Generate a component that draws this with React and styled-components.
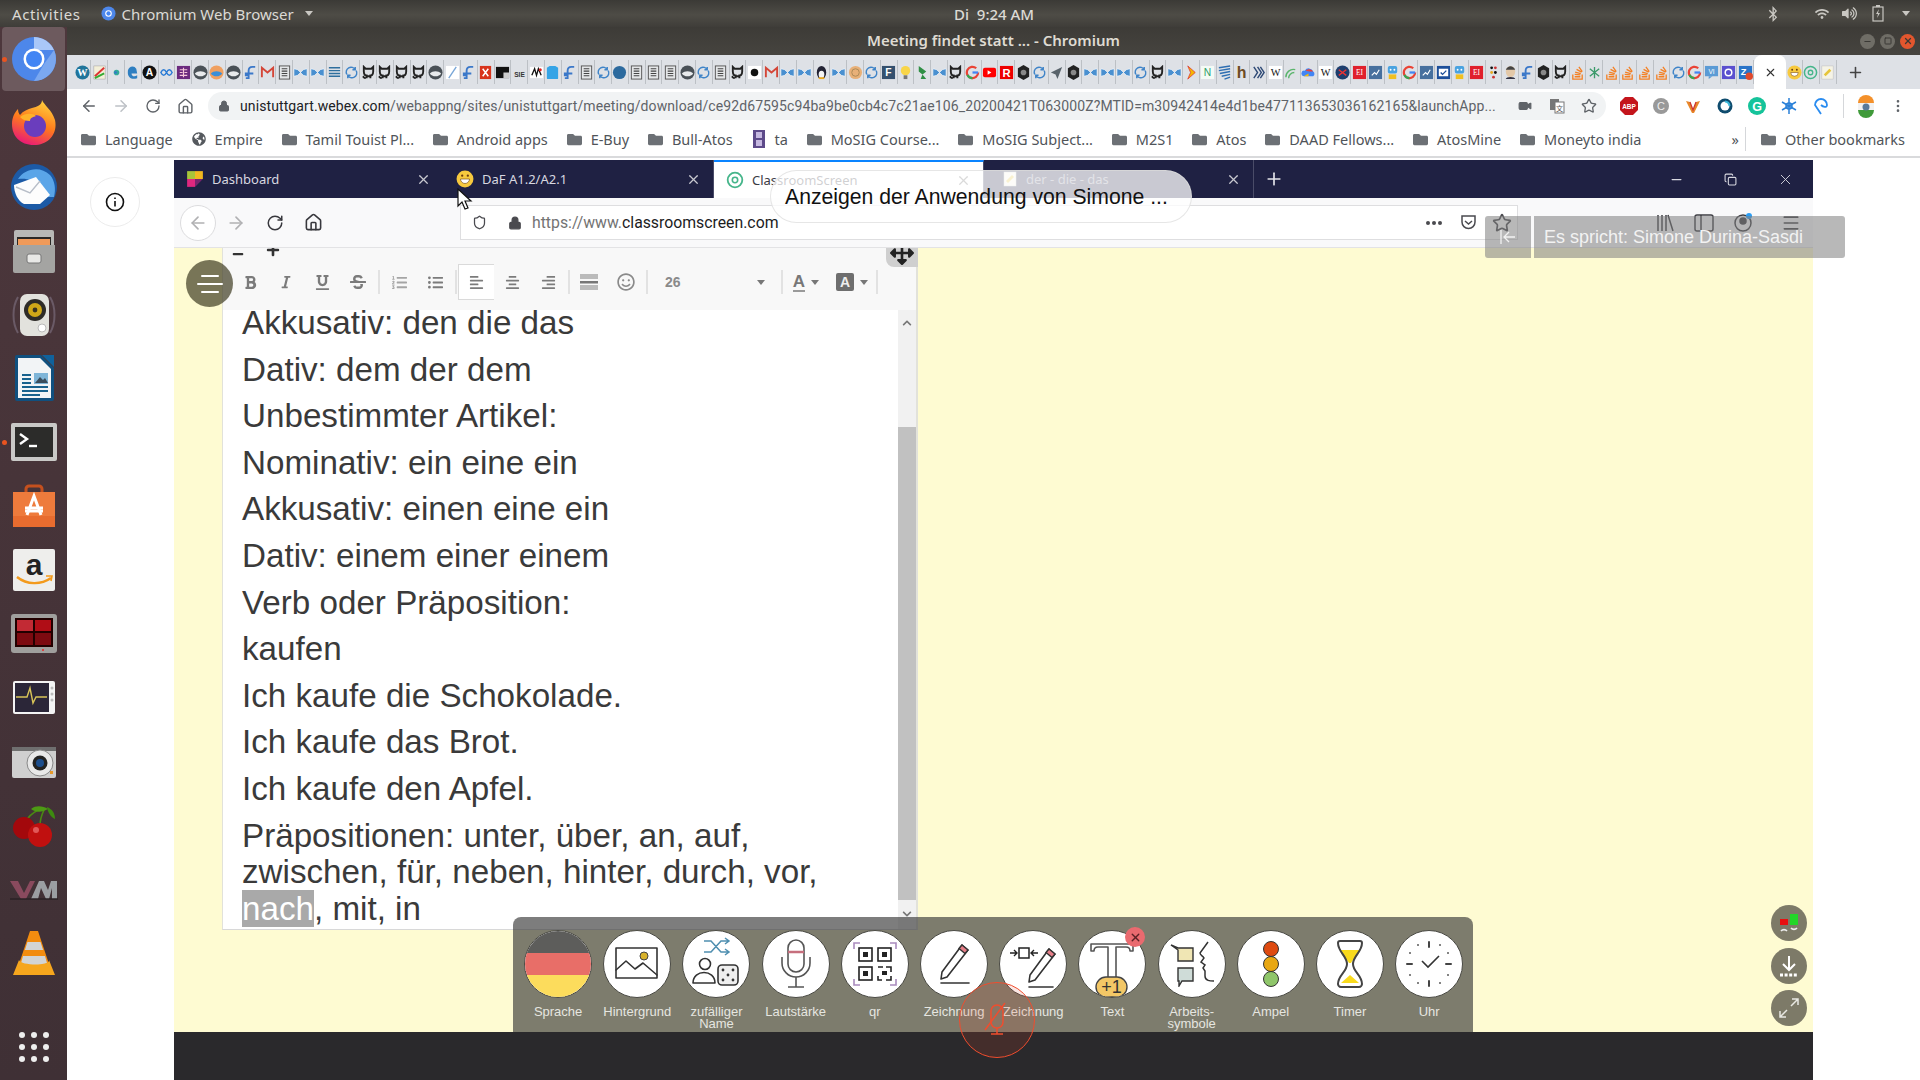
import React from "react";
import styled, { createGlobalStyle } from "styled-components";
import {
  ArrowLeft,
  ArrowRight,
  RotateCw,
  Home,
  Star,
  Video,
  Lock,
  Plus,
  X,
  Minus,
  Square,
  Copy,
  MoreVertical,
  Menu,
  Shield,
} from "lucide-react";
import {
  FaBold,
  FaItalic,
  FaUnderline,
  FaStrikethrough,
  FaListOl,
  FaListUl,
  FaAlignLeft,
  FaAlignCenter,
  FaAlignRight,
  FaRegSmile,
  FaArrowsAlt,
  FaMinus,
  FaPlus,
  FaBluetoothB,
  FaWifi,
  FaVolumeUp,
  FaFolder,
  FaGlobeAmericas,
  FaChevronUp,
  FaChevronDown,
} from "react-icons/fa";

const UI_FONT = `"Noto Sans", "Open Sans", sans-serif`;
const ARIAL = `"Liberation Sans", Arial, sans-serif`;

const Global = createGlobalStyle`
  html, body { margin: 0; padding: 0; height: 100%; overflow: hidden; background: #fff; }
  * { box-sizing: border-box; }
`;

const Screen = styled.div`
  width: 1920px;
  height: 1080px;
  display: flex;
  flex-direction: column;
  overflow: hidden;
  position: relative;
  font-family: ${UI_FONT};
`;

/* gnome top bar */
const TopBar = styled.div`
  height: 27px;
  flex: none;
  display: flex;
  align-items: center;
  color: #dcdad5;
  font-size: 15px;
  background: linear-gradient(#3b3a36, #4e4c46 55%, #3f3d39);
`;
const TopLeft = styled.div`
  width: 954px;
  display: flex;
  align-items: center;
  padding-left: 12px;
`;
const Activities = styled.span`
  letter-spacing: 0.6px;
`;
const AppName = styled.span`
  display: flex;
  align-items: center;
  gap: 6px;
  margin-left: 20px;
`;
const Caret = styled.span`
  width: 0;
  height: 0;
  border-left: 4px solid transparent;
  border-right: 4px solid transparent;
  border-top: 5px solid ${(p) => p.$color || "#c9c7c2"};
  margin-left: ${(p) => p.$gap || 5}px;
`;
const Clock = styled.div`
  font-weight: 500;
  white-space: pre;
`;
const TopStatus = styled.div`
  margin-left: auto;
  display: flex;
  align-items: center;
  padding-right: 10px;
  gap: 13px;
  color: #c9c7c2;
`;
const BluetoothIcon = styled(FaBluetoothB)`
  margin-right: 21px;
`;
const VolumeIcon = styled(FaVolumeUp)`
  margin-right: 2px;
`;

const Body = styled.div`
  flex: 1;
  display: flex;
  min-height: 0;
`;

/* launcher */
const Dock = styled.div`
  width: 67px;
  flex: none;
  display: flex;
  flex-direction: column;
  align-items: center;
  background: linear-gradient(#4d373c, #3f3035);
`;
const DockItem = styled.div`
  width: 63px;
  height: 63.9px;
  flex: none;
  display: flex;
  align-items: center;
  justify-content: center;
  position: relative;
  border-radius: 4px;
  background: ${(p) => (p.$active ? "#6d5a5e" : "transparent")};
  margin-top: ${(p) => p.$push || 0}px;
`;
const RunDot = styled.span`
  position: absolute;
  left: 0;
  top: 50%;
  width: 5px;
  height: 5px;
  margin-top: -2px;
  border-radius: 50%;
  background: #e95420;
`;

const Window = styled.div`
  flex: 1;
  min-width: 0;
  display: flex;
  flex-direction: column;
`;
const TitleBar = styled.div`
  height: 28px;
  flex: none;
  display: grid;
  grid-template-columns: 1fr auto 1fr;
  align-items: center;
  color: #dfdbd2;
  font-size: 15px;
  font-weight: 600;
  background: linear-gradient(#3d3b37, #46443f);
`;
const TitleText = styled.span`
  grid-column: 2;
  margin-top: -2px;
`;
const WinButtons = styled.div`
  grid-column: 3;
  justify-self: end;
  display: flex;
  gap: 5px;
  padding-right: 5px;
`;
const WinButton = styled.span`
  width: 15px;
  height: 15px;
  border-radius: 50%;
  display: flex;
  align-items: center;
  justify-content: center;
  background: ${(p) => (p.$close ? "#e2562e" : "#6f6d66")};
  color: #3a3935;
`;

const FavStrip = styled.div`
  height: 34px;
  flex: none;
  display: flex;
  align-items: center;
  padding-left: 7.6px;
  background: #dee1e6;
`;
const FavSlot = styled.div`
  flex: 0 0 16.8px;
  height: 24px;
  display: flex;
  align-items: center;
  justify-content: center;
  border-right: 1px solid #bcc0c5;
`;
const ActiveFavTab = styled.div`
  flex: 0 0 32px;
  height: 34px;
  border-radius: 8px 8px 0 0;
  background: #fff;
  display: flex;
  align-items: center;
  justify-content: center;
  color: #333;
`;
const PlusTab = styled.div`
  margin-left: 10px;
  color: #444;
  display: flex;
`;

const AddressRow = styled.div`
  height: 34px;
  flex: none;
  background: #fff;
  display: flex;
  align-items: center;
  padding-left: 6px;
  color: #5f6368;
`;
const NavIcon = styled.span`
  width: 32px;
  display: flex;
  justify-content: center;
  color: ${(p) => (p.$muted ? "#bdc1c6" : "#5f6368")};
`;
const Omnibox = styled.div`
  width: 1398px;
  height: 28px;
  margin-left: 7px;
  border-radius: 14px;
  background: #f1f3f4;
  display: flex;
  align-items: center;
  padding-left: 10px;
  font-size: 14px;
  color: #5f6368;
`;
const UrlText = styled.div`
  margin-left: 10px;
  width: 1269px;
  white-space: nowrap;
  overflow: hidden;
  font-family: "Roboto", sans-serif;
  letter-spacing: 0.1px;
  b {
    font-weight: 400;
    color: #202124;
  }
`;
const OmniIcon = styled.span`
  width: 32px;
  display: flex;
  justify-content: center;
  color: #5f6368;
  flex: none;
`;
const ExtIcon = styled.span`
  width: 32px;
  display: flex;
  justify-content: center;
  flex: none;
`;
const Extensions = styled.div`
  margin-left: 7px;
  display: flex;
  align-items: center;
`;
const ThinSep = styled.span`
  width: 1px;
  height: 24px;
  background: #d5d7da;
  margin: 0 6px;
  flex: none;
`;

const BookmarkRow = styled.div`
  height: 35px;
  flex: none;
  background: #fff;
  border-bottom: 2px solid #d9dadc;
  display: flex;
  align-items: center;
  padding: 0 0 1px 14px;
  font-size: 14.5px;
  color: #4d5156;
`;
const Bookmark = styled.div`
  display: flex;
  align-items: center;
  gap: 9px;
  margin-right: ${(p) => (p.$end ? 0 : 18.8)}px;
  margin-left: ${(p) => (p.$end ? 9 : 0)}px;
  white-space: nowrap;
  color: #505459;
  svg {
    flex: none;
  }
`;
const BookmarkEnd = styled.div`
  margin-left: auto;
  display: flex;
  align-items: center;
  padding-right: 15px;
  color: #505459;
`;

/* the shared browser inside the meeting */
const Stage = styled.div`
  flex: 1;
  min-height: 0;
  background: #fff;
  display: flex;
  padding-left: 107px;
  padding-top: 2px;
  position: relative;
`;
const InfoButton = styled.div`
  position: absolute;
  left: 23px;
  top: 19px;
  width: 50px;
  height: 50px;
  border-radius: 50%;
  border: 1.5px solid #ececec;
  display: flex;
  align-items: center;
  justify-content: center;
`;
const Meeting = styled.div`
  width: 1639px;
  display: flex;
  flex-direction: column;
  position: relative;
`;
const FxTabs = styled.div`
  height: 38px;
  flex: none;
  display: flex;
  background: #1f2143;
  color: #e4e4ea;
  font-size: 13px;
`;
const FxTab = styled.div`
  width: 270px;
  flex: none;
  display: flex;
  align-items: center;
  padding-left: ${(p) => p.$pad || 12}px;
  border-right: 1px solid ${(p) => (p.$first ? "transparent" : "#4a4c68")};
  background: ${(p) => (p.$active ? "#fff" : "#1f2143")};
  color: ${(p) => (p.$active ? "#3a3a44" : p.$dim ? "#8b8ca0" : "#d8d8e0")};
  border-top: ${(p) => (p.$active ? "2px solid #0a84ff" : "0")};
  gap: 8px;
`;
const FxTabClose = styled.span`
  margin-left: auto;
  margin-right: 12px;
  display: flex;
  color: ${(p) => (p.$dark ? "#666" : "#c8c8d0")};
`;
const FxNew = styled.div`
  width: 40px;
  display: flex;
  align-items: center;
  justify-content: center;
`;
const FxWinControls = styled.div`
  margin-left: auto;
  display: flex;
  align-items: center;
  padding-right: 19px;
  gap: 40px;
  color: #d8d8e0;
`;
const FxToolbar = styled.div`
  height: 50px;
  flex: none;
  background: #f9f9fa;
  border-bottom: 1px solid #e3e3e5;
  display: flex;
  align-items: center;
  position: relative;
  color: #4a4a4f;
`;
const BackCircle = styled.div`
  width: 36px;
  height: 36px;
  margin-left: 6px;
  border-radius: 50%;
  border: 1px solid #dcdcde;
  background: #fff;
  display: flex;
  align-items: center;
  justify-content: center;
  color: #b1b1b3;
`;
const FxNav = styled.span`
  width: 39px;
  display: flex;
  justify-content: center;
  color: ${(p) => (p.$muted ? "#b1b1b3" : "#38383d")};
`;
const UrlBox = styled.div`
  position: absolute;
  left: 286px;
  top: 7px;
  width: 1058px;
  height: 35px;
  background: #fff;
  border: 1px solid #dedee0;
  display: flex;
  align-items: center;
  padding-left: 2px;
  font-size: 15.8px;
  color: #737373;
  font-family: "Roboto", sans-serif;
  b {
    font-weight: 400;
    color: #1c1c1e;
  }
`;
const UrlIcon = styled.span`
  display: flex;
  width: ${(p) => p.$w || 34}px;
  justify-content: center;
  color: #4a4a4f;
  flex: none;
`;
const UrlAddress = styled.span`
  margin-left: -3px;
`;
const UrlActions = styled.span`
  margin-left: auto;
  margin-right: -2px;
  display: flex;
  align-items: center;
`;
const FxRight = styled.div`
  position: absolute;
  left: 1481px;
  top: 0;
  height: 49px;
  display: flex;
  align-items: center;
  gap: 19px;
  color: #3c3c42;
`;
const FxMenu = styled.span`
  display: flex;
  margin-left: 9px;
`;

const Page = styled.div`
  flex: 1;
  min-height: 0;
  background: #fefbd2;
  padding-left: 48px;
  position: relative;
  overflow: hidden;
`;
const Editor = styled.div`
  width: 696px;
  height: 682px;
  display: flex;
  flex-direction: column;
  background: #f8f8f8;
  border-left: 1px solid #e2e2da;
  border-right: 2px solid #e2e2da;
  border-bottom: 1px solid #d8d8d8;
  position: relative;
`;
const EditToolbar = styled.div`
  height: 62px;
  flex: none;
  color: #7b7b7b;
`;
const ZoomRow = styled.div`
  height: 14px;
  display: flex;
  align-items: flex-start;
  padding-left: 9px;
  gap: 22px;
  overflow: hidden;
  color: #333;
`;
const ZoomPlus = styled.span`
  display: flex;
  margin-top: -5px;
`;
const EditRow = styled.div`
  height: 40px;
  display: flex;
  align-items: center;
  padding-left: 9px;
`;
const ToolBtn = styled.span`
  width: ${(p) => p.$w || 36}px;
  height: ${(p) => (p.$on ? "36px" : "auto")};
  flex: none;
  display: flex;
  align-items: center;
  justify-content: center;
  background: ${(p) => (p.$on ? "#fff" : "transparent")};
  border: ${(p) => (p.$on ? "1px solid #dadada" : "0")};
  border-right: 0;
`;
const ToolSep = styled.span`
  width: 2px;
  height: 24px;
  margin: 0 1.5px;
  background: #e2e2e2;
  flex: none;
`;
const SizeSelect = styled.div`
  width: 130px;
  flex: none;
  display: flex;
  align-items: center;
  justify-content: space-between;
  padding: 0 14px 0 16px;
  font-family: ${ARIAL};
  font-size: 14px;
  font-weight: 700;
  color: #8a8a8a;
`;
const ColorBtn = styled.span`
  width: 44px;
  flex: none;
  display: flex;
  align-items: center;
  justify-content: center;
  gap: 1px;
  margin-left: ${(p) => p.$gap || 0}px;
  font-family: ${ARIAL};
  font-size: 17px;
  font-weight: 700;
  color: #777;
`;
const FilledA = styled.span`
  width: 18px;
  height: 18px;
  border-radius: 2px;
  background: #6e6e6e;
  color: #eee;
  font-size: 14px;
  text-align: center;
  line-height: 18px;
`;
const UnderA = styled.span`
  border-bottom: 2px solid #9a9a9a;
  line-height: 17px;
`;
const MoveHandle = styled.div`
  position: absolute;
  right: -2px;
  top: 0;
  width: 32px;
  height: 19px;
  background: #cfcfcf;
  border-bottom-left-radius: 8px;
  overflow: hidden;
  display: flex;
  justify-content: center;
  align-items: flex-end;
  color: #222;
  padding-bottom: 2px;
`;
const TextPane = styled.div`
  flex: 1;
  min-height: 0;
  display: flex;
  background: #fff;
  overflow: hidden;
`;
const TextFlow = styled.div`
  flex: 1;
  padding-left: 19px;
  margin-top: -5px;
  font-family: ${ARIAL};
  font-size: 33.2px;
  line-height: 36.5px;
  color: #3a3a3a;
`;
const Para = styled.p`
  margin: 0 0 10.1px;
`;
const Selected = styled.span`
  background: #a9a9a9;
  color: #fff;
`;
const ScrollTrack = styled.div`
  width: 18px;
  flex: none;
  background: #f1f1f1;
  display: flex;
  flex-direction: column;
  align-items: center;
  color: #777;
  padding-top: 8px;
`;
const ScrollThumb = styled.div`
  width: 18px;
  height: 473px;
  margin-top: 99px;
  background: #c1c1c1;
`;
const ScrollDown = styled.span`
  margin-top: 9px;
  display: flex;
`;
const Hamburger = styled.div`
  position: absolute;
  left: 12px;
  top: 12px;
  width: 47px;
  height: 47px;
  border-radius: 50%;
  background: rgba(62, 60, 34, 0.7);
  display: flex;
  flex-direction: column;
  justify-content: center;
  align-items: center;
  gap: 6px;
`;
const HamLine = styled.span`
  display: block;
  height: 2px;
  width: ${(p) => p.$w}px;
  background: #fff;
  border-radius: 1px;
`;

/* classroomscreen dock */
const ToolPanel = styled.div`
  position: absolute;
  left: 339px;
  bottom: 0;
  width: 960px;
  height: 115px;
  padding: 13px 0 0 5.5px;
  background: rgba(55, 55, 55, 0.65);
  border-radius: 8px 8px 0 0;
  display: flex;
  overflow: hidden;
`;
const Tool = styled.div`
  width: 79.2px;
  flex: none;
  display: flex;
  flex-direction: column;
  align-items: center;
  position: relative;
`;
const ToolCircle = styled.div`
  width: 68px;
  height: 68px;
  border-radius: 50%;
  background: #fff;
  border: 1px solid #4a4a44;
  overflow: hidden;
  display: flex;
  align-items: center;
  justify-content: center;
`;
const ToolLabel = styled.div`
  margin-top: 8px;
  font-family: ${ARIAL};
  font-size: 13px;
  line-height: 12px;
  color: #e6e6e0;
  text-align: center;
  white-space: pre-line;
`;
const Stripe = styled.div`
  flex: 1;
  width: 100%;
  background: ${(p) => p.$c};
`;
const FlagCircle = styled(ToolCircle)`
  flex-direction: column;
`;
const Badge = styled.span`
  position: absolute;
  right: 7px;
  top: -3px;
  width: 20px;
  height: 20px;
  border-radius: 50%;
  background: #ea6a6f;
  display: flex;
  align-items: center;
  justify-content: center;
  color: #5a2024;
`;
const SideButtons = styled.div`
  position: absolute;
  right: 6px;
  bottom: 6px;
  display: flex;
  flex-direction: column;
  gap: 6.5px;
`;
const SideButton = styled.div`
  width: 36px;
  height: 36px;
  border-radius: 50%;
  background: #7d7a68;
  display: flex;
  align-items: center;
  justify-content: center;
  color: #eee;
`;
const BottomBar = styled.div`
  height: 48px;
  flex: none;
  background: #2a292c;
`;

/* webex overlays */
const SharePill = styled.div`
  position: absolute;
  left: 596px;
  top: 10px;
  width: 422px;
  height: 53px;
  border-radius: 27px;
  border: 1px solid rgba(220, 220, 220, 0.7);
  background: rgba(255, 255, 255, 0.76);
  font-family: ${ARIAL};
  font-size: 21.2px;
  color: #111;
  padding-left: 14px;
  line-height: 51px;
  white-space: nowrap;
`;
const SpeakerBar = styled.div`
  position: absolute;
  left: 1311px;
  top: 56px;
  width: 360px;
  height: 42px;
  display: flex;
  gap: 3px;
  font-family: ${ARIAL};
  font-size: 18px;
  color: #f2f2f2;
`;
const SpeakerBack = styled.div`
  width: 46px;
  flex: none;
  background: rgba(125, 125, 125, 0.55);
  border-radius: 3px 0 0 3px;
  display: flex;
  align-items: center;
  justify-content: center;
`;
const SpeakerName = styled.div`
  flex: 1;
  background: rgba(125, 125, 125, 0.55);
  border-radius: 0 3px 3px 0;
  padding-left: 10px;
  line-height: 42px;
  white-space: nowrap;
`;
const MutedMic = styled.div`
  position: absolute;
  left: 785px;
  bottom: 22px;
  width: 76px;
  height: 76px;
  border-radius: 50%;
  border: 1.5px solid #f04d2e;
  background: rgba(230, 70, 40, 0.14);
  display: flex;
  align-items: center;
  justify-content: center;
`;
const CursorMark = styled.svg`
  position: absolute;
  left: 283px;
  top: 28px;
`;

const FAVICONS = {
  wp: (
    <>
      <circle cx="8" cy="8" r="7.5" fill="#21759b" />
      <text x="8" y="12" fontSize="11" fontFamily="Liberation Serif" fontWeight="700" fill="#fff" textAnchor="middle">W</text>
    </>
  ),
  note: (
    <>
      <rect x="2" y="1" width="12" height="14" fill="#f3efd8" stroke="#999" strokeWidth=".5" />
      <path d="M3 12 L13 3" stroke="#d33" strokeWidth="2" />
      <path d="M3 14 L13 9" stroke="#3a3" strokeWidth="2" />
    </>
  ),
  dot: <><circle cx="8" cy="8" r="3" fill="#3a9" /><circle cx="7" cy="8" r="1.4" fill="#37c" /></>,
  edge: <path d="M3 8a5 6 0 0 1 9-4l1 5H7c0 3 3 4 6 2v3c-5 2-10 0-10-6z" fill="#2f7fc1" />,
  a: (
    <>
      <circle cx="8" cy="8" r="7.5" fill="#111" />
      <text x="8" y="12" fontSize="11" fontFamily="Liberation Sans" fontWeight="700" fill="#fff" textAnchor="middle">A</text>
    </>
  ),
  inf: <path d="M2 8c2-4 4-4 6 0s4 4 6 0c-2-4-4-4-6 0s-4 4-6 0z" fill="none" stroke="#2a7bd5" strokeWidth="1.6" />,
  pur: (
    <>
      <rect x="1" y="1" width="14" height="14" fill="#6b2a7e" />
      <path d="M4 5h8M4 8h3M9 8h3M4 11h8M8 3v10" stroke="#f4c6d8" strokeWidth="1.2" />
    </>
  ),
  gl: (
    <>
      <circle cx="8" cy="8" r="7.5" fill="#4a5157" />
      <path d="M2 9c3-3 9-3 12 0-2 4-10 4-12 0z" fill="#e8eaec" />
    </>
  ),
  orb: (
    <>
      <circle cx="8" cy="8" r="7.5" fill="#f0a060" />
      <path d="M2 9c3-3 9-3 12 0-2 4-10 4-12 0z" fill="#3a8fd8" />
    </>
  ),
  fd: <path d="M10 2c-3 0-4 2-4 4v3H3v2h3v3H3M6 9h5M13 2h-3" fill="none" stroke="#3b78c9" strokeWidth="2" />,
  gm: <path d="M2 13V3l6 5 6-5v10" fill="none" stroke="#d44638" strokeWidth="2" />,
  doc: (
    <>
      <rect x="2.5" y="1" width="11" height="14" fill="#e4e6e8" stroke="#555" />
      <path d="M5 4h6M5 6.5h6M5 9h6M5 11.5h6" stroke="#444" strokeWidth="1.2" />
    </>
  ),
  vs: <path d="M1 4l4 1 3 3 3-3 4-1v8l-4-1-3-3-3 3-4 1z" fill="#4a90d0" stroke="#fff" strokeWidth=".6" />,
  lin: <path d="M2 3h12M2 6h12M2 9h12M2 12h12" stroke="#2e6f9e" strokeWidth="1.5" />,
  sw: <path d="M3 10a5 5 0 0 1 9-5M13 6a5 5 0 0 1-9 5M12 2v3H9M4 14v-3h3" fill="none" stroke="#3f84c8" strokeWidth="1.5" />,
  gh: (
    <path
      d="M3 2l2 2h6l2-2v5c0 3-2 5-5 5s-5-2-5-5zM5 14c-2 0-2-1-3-2M6 10v4M10 10v4"
      fill="none"
      stroke="#222"
      strokeWidth="2"
    />
  ),
  sl: <><rect x="1" y="1" width="14" height="14" fill="#fff" /><path d="M4 14L12 2" stroke="#7aa7d8" strokeWidth="1.5" /></>,
  red: <><rect x="2" y="1" width="12" height="14" fill="#d8341c" /><path d="M5 4l6 8M11 4l-6 8" stroke="#fff" strokeWidth="1.6" /></>,
  blk: <><rect x="1" y="2" width="14" height="12" fill="#111" /><rect x="9" y="8" width="6" height="6" fill="#ccc" /></>,
  sie: <text x="8" y="13" fontSize="7" fontFamily="Liberation Sans" fontWeight="700" fill="#333" textAnchor="middle">SIE</text>,
  wr: <><rect x="1" y="2" width="14" height="12" fill="#fff" /><path d="M3 11l3-7 2 7 2-7 3 7" fill="none" stroke="#111" strokeWidth="1.4" /><circle cx="12" cy="5" r="1.6" fill="#d22" /></>,
  ts: <path d="M2 3l3-2h6l3 2v11a1 1 0 0 1-1 1H3a1 1 0 0 1-1-1z" fill="#35a4e6" />,
  gb: <circle cx="8" cy="8" r="7" fill="#2c6a9e" />,
  bul: <><rect x="1" y="1" width="14" height="14" fill="#fff" /><circle cx="8" cy="8" r="4" fill="#111" /></>,
  tux: <><ellipse cx="8" cy="8" rx="5" ry="7" fill="#223" /><ellipse cx="8" cy="10" rx="3" ry="4" fill="#f4f4f4" /><path d="M5 14h6" stroke="#e9a820" strokeWidth="2" /></>,
  org: <><circle cx="8" cy="8" r="7" fill="#e8b078" /><circle cx="8" cy="8" r="4" fill="none" stroke="#a85" /></>,
  f: <><rect x="1" y="1" width="14" height="14" fill="#34506e" /><text x="8" y="12" fontSize="11" fontFamily="Liberation Sans" fontWeight="700" fill="#fff" textAnchor="middle">F</text></>,
  bulb: <><circle cx="8" cy="6" r="5" fill="#f8d548" /><rect x="6" y="11" width="4" height="4" fill="#777" /></>,
  grn: <path d="M4 1l8 6-4 3 4 5H6l2-5-4-3z" fill="#2f8f45" />,
  g: (
    <>
      <path d="M14 8a6 6 0 1 1-2-4.5" fill="none" stroke="#ea4335" strokeWidth="2.4" />
      <path d="M2.6 10.5A6 6 0 0 0 8 14" fill="none" stroke="#34a853" strokeWidth="2.4" />
      <path d="M8 8h6" stroke="#4285f4" strokeWidth="2.4" />
    </>
  ),
  yt: <><rect x="1" y="3" width="14" height="10" rx="2" fill="#f00" /><path d="M6 5.5v5l4-2.5z" fill="#fff" /></>,
  r: <><rect x="1" y="1" width="14" height="14" fill="#e00" /><text x="8" y="12.5" fontSize="12" fontFamily="Liberation Sans" fontWeight="700" fill="#fff" textAnchor="middle">R</text></>,
  hex: <><path d="M8 0l6 3.5v9L8 16l-6-3.5v-9z" fill="#222" /><circle cx="8" cy="8" r="3" fill="#888" /></>,
  pl: <path d="M2 8l12-6-5 13-2-5z" fill="#59636b" />,
  yr: <path d="M4 1l8 7-8 7 3-7z" fill="#f5b800" stroke="#d33" strokeWidth=".8" />,
  n: <><rect x="1" y="1" width="14" height="14" fill="#f4fbf6" /><text x="8" y="12" fontSize="11" fontFamily="Liberation Sans" fill="#2e9e6a" textAnchor="middle">N</text></>,
  bs: <path d="M2 3l12-2M2 6l12-2M3 9l11-2M5 12l9-2M8 15l6-2" stroke="#2f6fb2" strokeWidth="1.5" />,
  h: <text x="8" y="14" fontSize="17" fontFamily="Liberation Sans" fontWeight="700" fill="#6d4c24" textAnchor="middle">h</text>,
  wa: <path d="M3 2l4 6-4 6M7 2l4 6-4 6M10 2l4 6-4 6" fill="none" stroke="#2f4a76" strokeWidth="1.5" />,
  w: <><rect x="1" y="1" width="14" height="14" fill="#fff" /><text x="8" y="12" fontSize="11" fontFamily="Liberation Serif" fill="#111" textAnchor="middle">W</text></>,
  rain: <path d="M2 13a8 8 0 0 1 10-8M5 14a6 6 0 0 1 6-6" fill="none" stroke="#5bb56c" strokeWidth="1.5" />,
  cl: <><path d="M3 12a3 3 0 0 1 1-6 5 5 0 0 1 9 1 3 3 0 0 1 0 5z" fill="#4285f4" /><path d="M5 6a5 5 0 0 1 8 1H9z" fill="#ea4335" /><path d="M3 12h5V9z" fill="#fbbc05" /></>,
  bd: <><circle cx="8" cy="8" r="7.5" fill="#1f3f6e" /><path d="M4 5l8 6M12 5l-8 6" stroke="#e33" strokeWidth="1.5" /></>,
  ei: <><rect x="1" y="1" width="14" height="14" fill="#e0202c" /><text x="8" y="11" fontSize="8" fontFamily="Liberation Serif" fill="#fff" textAnchor="middle">EI</text></>,
  bdoc: <><rect x="1" y="1" width="14" height="14" fill="#47709e" /><path d="M4 11l3-3 2 2 3-5" fill="none" stroke="#fff" strokeWidth="1.2" /></>,
  rob: <><rect x="3" y="1" width="10" height="8" rx="2" fill="#4aa3e0" /><rect x="4" y="10" width="8" height="5" fill="#f0c020" /><circle cx="6" cy="5" r="1" fill="#fff" /><circle cx="10" cy="5" r="1" fill="#fff" /></>,
  chk: <><rect x="1" y="1" width="14" height="14" fill="#1d4f9a" /><rect x="3" y="4" width="10" height="8" fill="#fff" /><path d="M5 8l2 2 4-4" fill="none" stroke="#1d4f9a" strokeWidth="1.5" /></>,
  dots: <><circle cx="6" cy="3" r="1.5" fill="#111" /><circle cx="10" cy="3" r="1.5" fill="#c33" /><circle cx="6" cy="8" r="1.5" fill="#e9a820" /><circle cx="10" cy="8" r="1.5" fill="#111" /><circle cx="8" cy="13" r="1.5" fill="#c33" /></>,
  jen: <><ellipse cx="8" cy="7" rx="5" ry="6" fill="#e3c8a8" /><path d="M3 15c0-3 10-3 10 0z" fill="#334" /><path d="M3 5c2-5 8-5 10 0z" fill="#444" /></>,
  so: <path d="M3 10v5h10v-5M5 12.5h6M5 10l6 .6M5.5 7.5l6 1.6M7 4.6l5.4 3M9.5 2l3.6 5" fill="none" stroke="#f48024" strokeWidth="1.4" />,
  ast: <path d="M8 2v12M3 4l10 8M13 4L3 12" stroke="#3a9a6a" strokeWidth="1.4" />,
  vi: <><rect x="1" y="1" width="14" height="11" fill="#5b9bd5" /><path d="M5 12v3l4-3z" fill="#5b9bd5" /><text x="8" y="10" fontSize="7" fontFamily="Liberation Sans" fill="#fff" textAnchor="middle">VI</text></>,
  ppl: <><rect x="1" y="1" width="14" height="14" fill="#5a4fcf" /><circle cx="8" cy="8" r="3.5" fill="none" stroke="#fff" strokeWidth="1.6" /></>,
  z: <><rect x="1" y="1" width="14" height="14" fill="#2a74c8" /><text x="6" y="11" fontSize="10" fontFamily="Liberation Sans" fontWeight="700" fill="#fff" textAnchor="middle">Z</text><circle cx="12" cy="12" r="4" fill="#e0492c" /></>,
  emo: <><circle cx="8" cy="8" r="7.5" fill="#f7c93e" /><path d="M4 8h8a4 4 0 0 1-8 0z" fill="#fff" stroke="#7a4a10" strokeWidth=".6" /><circle cx="5.5" cy="5" r="1" fill="#6a3a10" /><circle cx="10.5" cy="5" r="1" fill="#6a3a10" /></>,
  crs: <><circle cx="8" cy="8" r="6.5" fill="none" stroke="#45b58a" strokeWidth="1.6" /><circle cx="8" cy="8" r="2.4" fill="none" stroke="#45b58a" strokeWidth="1.4" /></>,
  nt: <><rect x="2" y="1" width="12" height="14" fill="#f5f3e6" stroke="#bbb" strokeWidth=".5" /><path d="M4 10l6-6 2 2-6 6z" fill="#e6c53a" /></>,
  dash: <><rect x="1" y="1" width="7" height="7" fill="#a7c53a" /><rect x="8" y="1" width="7" height="7" fill="#f1b81f" /><rect x="1" y="8" width="7" height="7" fill="#e0277f" /><path d="M8 8h7l-7 7z" fill="#77246e" /></>,
};

const FAV_ROW =
  "wp note dot edge a inf pur gl orb gl fd gm doc vs vs lin sw gh gh gh gh gl sl fd red blk sie wr ts fd doc sw gb doc doc doc gl sw doc gh bul gm vs vs tux vs org sw f bulb grn vs gh g yt r hex sw pl hex vs vs vs sw gh vs yr n bs h wa w rain cl w bd ei bdoc rob g bdoc chk rob ei dots jen fd hex gh so ast so so so so sw g vi ppl z".split(
    " "
  );

function Fav({ kind, size = 16 }) {
  return (
    <svg width={size} height={size} viewBox="0 0 16 16">
      {FAVICONS[kind]}
    </svg>
  );
}

const BOOKMARKS = [
  ["Language"],
  ["Empire", "globe"],
  ["Tamil Touist Pl..."],
  ["Android apps"],
  ["E-Buy"],
  ["Bull-Atos"],
  ["ta", "film"],
  ["MoSIG Course..."],
  ["MoSIG Subject..."],
  ["M2S1"],
  ["Atos"],
  ["DAAD Fellows..."],
  ["AtosMine"],
  ["Moneyto india"],
];

function BookmarkIcon({ type }) {
  if (type === "globe") return <FaGlobeAmericas size={14} color="#55595e" />;
  if (type === "film")
    return (
      <svg width="14" height="18" viewBox="0 0 14 18">
        <rect x="1" y="0" width="12" height="18" fill="#5d4a8a" />
        <rect x="4" y="2" width="6" height="6" fill="#c5b8e0" />
        <rect x="4" y="10" width="6" height="6" fill="#c5b8e0" />
      </svg>
    );
  return <FaFolder size={15} color="#6c7075" />;
}

/* launcher artwork */
const DOCK_ICONS = [
  <svg key="chromium" width="46" height="46" viewBox="0 0 46 46">
    <circle cx="23" cy="23" r="22" fill="#4d87ea" />
    <path d="M23 1a22 22 0 0 1 20 13H23z" fill="#a9c7f8" />
    <path d="M43 14a22 22 0 0 1-20 31l10-17z" fill="#7ba8f0" />
    <circle cx="23" cy="23" r="10.5" fill="#fff" />
    <circle cx="23" cy="23" r="8" fill="#4285f4" />
  </svg>,
  <svg key="firefox" width="46" height="46" viewBox="0 0 46 46">
    <defs>
      <linearGradient id="ffx" x1="0.7" y1="0" x2="0.3" y2="1">
        <stop offset="0" stopColor="#ffd13d" />
        <stop offset=".5" stopColor="#ff7b1c" />
        <stop offset="1" stopColor="#e8167a" />
      </linearGradient>
    </defs>
    <path d="M31 0c2 5 10 10 13 20 3 14-7 25-21 25S1 36 1 24C1 17 4 12 7 9c0 3 1 5 2 6 3-4 8-6 12-7 5-1 10-3 10-8z" fill="url(#ffx)" />
    <circle cx="24" cy="26" r="11" fill="#6a3dbd" />
    <path d="M9 17c5-4 13-4 16-1-3 1-6 2-6 5-4 0-7-1-10-4z" fill="#ffb32a" />
  </svg>,
  <svg key="tbird" width="48" height="48" viewBox="0 0 48 48">
    <circle cx="24" cy="24" r="23" fill="#1c5aa6" />
    <path d="M8 16C14 6 30 2 40 12c5 6 6 14 4 22l-12 0C34 24 24 14 8 16z" fill="#5aa5e8" />
    <path d="M4 22l22-8 14 18-10 9H14C8 38 4 30 4 22z" fill="#fdfdfd" />
    <path d="M6 24l14 6 10-12" fill="none" stroke="#b8bec8" strokeWidth="1.4" />
  </svg>,
  <svg key="files" width="42" height="44" viewBox="0 0 42 44">
    <rect x="1" y="1" width="40" height="42" rx="2" fill="#b8b8b6" />
    <rect x="4" y="8" width="34" height="12" fill="#2a2826" />
    <rect x="5" y="10" width="32" height="9" fill="#ef9a5a" />
    <path d="M0 16h42v26a2 2 0 0 1-2 2H2a2 2 0 0 1-2-2z" fill="#a4a4a2" />
    <rect x="14" y="25" width="14" height="9" rx="2" fill="#e8e8e6" stroke="#777" />
  </svg>,
  <svg key="speaker" width="48" height="44" viewBox="0 0 48 44">
    <path d="M8 4C2 14 2 30 8 40M40 4c6 10 6 26 0 36" fill="none" stroke="#6a5a66" strokeWidth="2" />
    <rect x="10" y="1" width="29" height="42" rx="7" fill="#e2e2dd" />
    <circle cx="25" cy="17" r="11" fill="#2e2c28" />
    <circle cx="25" cy="17" r="7" fill="#d0a818" />
    <circle cx="25" cy="17" r="2.4" fill="#3a3420" />
    <circle cx="32" cy="35" r="4" fill="#fff" stroke="#bbb" />
  </svg>,
  <svg key="writer" width="42" height="48" viewBox="0 0 42 48">
    <path d="M2 3a2 2 0 0 1 2-2h24l13 13v31a2 2 0 0 1-2 2H4a2 2 0 0 1-2-2z" fill="#10507f" />
    <path d="M5 4h22l11 11v29H5z" fill="#f2f4f6" />
    <path d="M29 1h12v12z" fill="#10629c" />
    <path d="M9 21h9M9 25h9M9 29h9M9 33h26M9 37h26M9 41h18" stroke="#18628e" strokeWidth="2" />
    <rect x="21" y="19" width="14" height="11" fill="#7fb5d8" />
    <path d="M22 29l5-6 3 3 2-2 3 5z" fill="#3a4d5c" />
  </svg>,
  <svg key="terminal" width="46" height="38" viewBox="0 0 46 38">
    <rect x="0" y="0" width="46" height="38" rx="2" fill="#c9c9c7" />
    <rect x="4" y="4" width="38" height="30" fill="#2c2c2a" />
    <path d="M9 11l7 5-7 5" fill="none" stroke="#fff" strokeWidth="2.4" />
    <path d="M18 23h8" stroke="#fff" strokeWidth="2.4" />
  </svg>,
  <svg key="store" width="42" height="44" viewBox="0 0 42 44">
    <path d="M13 10V5a3 3 0 0 1 3-3h10a3 3 0 0 1 3 3v5" fill="none" stroke="#c5501e" strokeWidth="3" />
    <path d="M0 8h42v35H0z" fill="#ee7b3c" />
    <path d="M0 32h42v11H0z" fill="#e86c2f" />
    <path d="M14 31l7-19 7 19M12 24h18" fill="none" stroke="#fff" strokeWidth="3" />
    <path d="M12 27h18" stroke="#fff" strokeWidth="3" />
  </svg>,
  <svg key="amazon" width="42" height="42" viewBox="0 0 42 42">
    <rect x="0" y="0" width="42" height="42" rx="2" fill="#eeeeec" />
    <text x="21" y="26" fontSize="30" fontFamily="Liberation Sans" fontWeight="700" fill="#222" textAnchor="middle">a</text>
    <path d="M4 28c10 8 24 8 34 1" fill="none" stroke="#f39a1c" strokeWidth="2.4" />
    <path d="M33 27l6 0-1 5" fill="none" stroke="#f39a1c" strokeWidth="1.6" />
  </svg>,
  <svg key="multi" width="46" height="39" viewBox="0 0 46 39">
    <rect x="0" y="0" width="46" height="39" rx="3" fill="#9f9f9d" />
    <rect x="4" y="4" width="38" height="29" fill="#200" />
    <rect x="6" y="6" width="16" height="11" fill="#c22a34" />
    <rect x="24" y="6" width="16" height="11" fill="#b00d16" />
    <rect x="6" y="19" width="16" height="12" fill="#7c0a10" />
    <rect x="24" y="19" width="16" height="12" fill="#7c0a10" />
    <circle cx="32" cy="36" r="1" fill="#e22" />
  </svg>,
  <svg key="monitor" width="42" height="33" viewBox="0 0 42 33">
    <rect x="0" y="0" width="42" height="33" rx="2" fill="#f4f4f4" />
    <rect x="2" y="2" width="34" height="29" fill="#2b2638" />
    <path d="M3 16h11l3-9 3 15 3-6h11" fill="none" stroke="#d8c458" strokeWidth="1.4" />
    <circle cx="39" cy="7" r="1.5" fill="#bbb" />
    <circle cx="39" cy="13" r="1.5" fill="#bbb" />
    <circle cx="39" cy="19" r="1.5" fill="#bbb" />
  </svg>,
  <svg key="camera" width="44" height="32" viewBox="0 0 44 32">
    <rect x="0" y="1" width="44" height="31" rx="2" fill="#cfcfcf" />
    <rect x="0" y="1" width="44" height="4" fill="#6f6f6f" />
    <circle cx="28" cy="17" r="13" fill="#e8e8e8" stroke="#888" />
    <circle cx="28" cy="17" r="7.5" fill="#222" />
    <circle cx="28" cy="17" r="4" fill="#1b4d8c" />
    <rect x="38" y="25" width="3" height="3" fill="#e89a2a" />
  </svg>,
  <svg key="cherry" width="44" height="44" viewBox="0 0 44 44">
    <path d="M14 18C16 12 22 8 28 5M28 22c0-6 2-12 4-16" fill="none" stroke="#4a8a12" strokeWidth="1.6" />
    <path d="M19 5c5-4 12-3 17 0-5 3-12 4-17 0z" fill="#4d9a14" />
    <path d="M35 3c5 2 8 6 8 12-4-2-7-6-8-12z" fill="#3d8a10" />
    <circle cx="12" cy="24" r="11" fill="#a3080c" />
    <circle cx="28" cy="31" r="12" fill="#c0100f" />
    <circle cx="24" cy="26" r="3" fill="#e77" opacity=".7" />
  </svg>,
  <svg key="vm" width="48" height="20" viewBox="0 0 48 20">
    <path d="M0 1h8l6 12 6-12h5L16 19h-5z" fill="#8a4a5e" />
    <path d="M21 19l8-18h5l4 9 3-9h6v18h-5V8l-3 11h-3l-5-11-3 11z" fill="#9b9ea2" />
    <path d="M0 19h48" stroke="#2b2226" strokeWidth="1.4" />
  </svg>,
  <svg key="vlc" width="42" height="46" viewBox="0 0 42 46">
    <path d="M17 1h8l12 36H5z" fill="#f28c0f" />
    <path d="M14.5 12h13l2.6 8h-18.2zM10 26h22l2 7c-6 3-20 3-26 0z" fill="#d2d4d4" />
    <path d="M6 30L0 45h42l-6-15c2 6-28 6-30 0z" fill="#f6a61d" />
  </svg>,
];

function ToolGlyph({ name }) {
  const line = { fill: "none", stroke: "#333", strokeWidth: 1.6, strokeLinejoin: "round", strokeLinecap: "round" };
  switch (name) {
    case "image":
      return (
        <svg width="44" height="34" viewBox="0 0 44 34">
          <rect x="1" y="1" width="41" height="30" {...line} />
          <path d="M1 23l10-9 9 8 8-6 14 12" {...line} />
          <circle cx="29" cy="9" r="4" fill="#d8b22c" stroke="#444" />
        </svg>
      );
    case "random":
      return (
        <svg width="48" height="54" viewBox="0 0 48 54">
          <path d="M12 4h7l10 11h7M12 15h7l10-11h7M33 1l4 3-4 3M33 12l4 3-4 3" fill="none" stroke="#4f8fb0" strokeWidth="1.5" />
          <circle cx="13" cy="27" r="5.5" {...line} />
          <path d="M1 46c0-14 22-14 22 0z" {...line} />
          <rect x="26" y="28" width="20" height="20" rx="4" fill="#eee" stroke="#333" strokeWidth="1.6" />
          <g fill="#333">
            <circle cx="31" cy="33" r="1.4" /><circle cx="41" cy="33" r="1.4" /><circle cx="36" cy="38" r="1.4" /><circle cx="31" cy="43" r="1.4" /><circle cx="41" cy="43" r="1.4" />
          </g>
        </svg>
      );
    case "mic":
      return (
        <svg width="30" height="50" viewBox="0 0 30 50">
          <rect x="7" y="1" width="16" height="32" rx="8" fill="none" stroke="#555" strokeWidth="1.6" />
          <path d="M7 13h16" stroke="#c66f7d" strokeWidth="2.4" />
          <path d="M1 18v6a14 14 0 0 0 28 0v-6M15 38v10M7 48h16" fill="none" stroke="#555" strokeWidth="1.6" />
        </svg>
      );
    case "qr":
      return (
        <svg width="44" height="44" viewBox="0 0 44 44">
          <path d="M1 7V1h6M37 1h6v6M43 37v6h-6M7 43H1v-6" fill="none" stroke="#a98bbd" strokeWidth="1.6" />
          <g fill="none" stroke="#222" strokeWidth="1.6">
            <rect x="6" y="6" width="13" height="13" /><rect x="25" y="6" width="13" height="13" /><rect x="6" y="25" width="13" height="13" />
            <path d="M25 25h5M33 25h5v5M38 34v4h-5M29 38h-4v-4" />
          </g>
          <g fill="#222">
            <rect x="10" y="10" width="5" height="5" /><rect x="29" y="10" width="5" height="5" /><rect x="10" y="29" width="5" height="5" /><rect x="29" y="29" width="5" height="4" />
          </g>
        </svg>
      );
    case "pencil":
      return (
        <svg width="32" height="44" viewBox="0 0 32 44">
          <path d="M24 3l6 5L9 35l-6 2 1-7z" {...line} />
          <path d="M24 3l6 5-3 3.500-6-5z" fill="#e67e88" stroke="#333" strokeWidth="1.4" />
          <path d="M3 41h28" {...line} />
        </svg>
      );
    case "pencilLine":
      return (
        <svg width="48" height="48" viewBox="0 0 48 48">
          <path d="M1 13h7M5 10l3 3-3 3M29 13h-7M25 10l-3 3 3 3" fill="none" stroke="#222" strokeWidth="1.4" />
          <rect x="10" y="8" width="10" height="10" fill="none" stroke="#222" strokeWidth="1.5" />
          <path d="M40 9l6 5-20 26-6 2 1-7z" {...line} />
          <path d="M40 9l6 5-3 3.500-6-5z" fill="#e67e88" stroke="#333" strokeWidth="1.4" />
          <path d="M20 47h24" {...line} />
        </svg>
      );
    case "text":
      return (
        <svg width="56" height="68" viewBox="0 0 56 68">
          <path d="M7 21v-7h42v7h-3c0-3-1-4-4-4H32v34h-8V17H14c-3 0-4 1-4 4z" fill="#fff" stroke="#555" strokeWidth="1.6" strokeLinejoin="round" />
          <rect x="12" y="47" width="31" height="20" rx="10" fill="#f3c766" stroke="#444" strokeWidth="1.4" />
          <text x="27.500" y="63" fontSize="18" fontFamily="Liberation Sans" fill="#333" textAnchor="middle">+1</text>
        </svg>
      );
    case "speech":
      return (
        <svg width="44" height="46" viewBox="0 0 44 46">
          <path d="M1 4l7 3h15v13H8V9z" fill="#f0e6b4" stroke="#333" strokeWidth="1.4" />
          <path d="M8 27h15v13H12l-3 5v-5H8z" fill="#cfdcd8" stroke="#333" strokeWidth="1.4" />
          <path d="M38 1l-8 11c0 2 3 3 4 5l-3 4 4 3-2 3 2 3v5c0 5 5 5 10 5" fill="none" stroke="#333" strokeWidth="1.5" />
        </svg>
      );
    case "lights":
      return (
        <svg width="18" height="48" viewBox="0 0 18 48">
          <circle cx="9" cy="9" r="7.5" fill="#de4a10" stroke="#333" />
          <circle cx="9" cy="24" r="7.5" fill="#e8a712" stroke="#333" />
          <circle cx="9" cy="39" r="7.5" fill="#8fc66a" stroke="#333" />
        </svg>
      );
    case "hourglass":
      return (
        <svg width="30" height="48" viewBox="0 0 30 48">
          <path d="M6 10h18c-1 6-7 9-7 14s7 8 9 16c0 4-2 5-4 5H7c-3 0-5-2-4-5 1-8 9-11 9-16S6 16 6 10z" fill="#fff" />
          <path d="M5 10c1 6 7 9 9 13h2c2-4 8-7 9-13z" fill="#f9da1c" />
          <path d="M6 43l9-8 9 8z" fill="#f9da1c" />
          <path d="M3 3c0-1 1-2 2-2h20c1 0 2 1 2 2 0 9-9 13-9 21s9 11 9 20c0 1-1 3-3 3H6c-2 0-3-2-3-3 0-9 9-12 9-20S3 12 3 3z" fill="none" stroke="#444" strokeWidth="2" />
        </svg>
      );
    case "clock":
      return (
        <svg width="48" height="48" viewBox="0 0 48 48">
          <g stroke="#444" strokeWidth="2" strokeLinecap="round">
            <path d="M24 2v5M24 41v5M2 24h5M41 24h5" />
          </g>
          <g fill="#666">
            <circle cx="13" cy="5" r="1.100" /><circle cx="35" cy="5" r="1.100" /><circle cx="5" cy="13" r="1.100" /><circle cx="43" cy="13" r="1.100" />
            <circle cx="5" cy="35" r="1.100" /><circle cx="43" cy="35" r="1.100" /><circle cx="13" cy="43" r="1.100" /><circle cx="35" cy="43" r="1.100" />
          </g>
          <path d="M17 21l6 6 11-11" fill="none" stroke="#333" strokeWidth="1.6" />
        </svg>
      );
    default:
      return null;
  }
}

const TOOLS = [
  { label: "Hintergrund", glyph: "image" },
  { label: "zufälliger\nName", glyph: "random" },
  { label: "Lautstärke", glyph: "mic" },
  { label: "qr", glyph: "qr" },
  { label: "Zeichnung", glyph: "pencil" },
  { label: "Zeichnung", glyph: "pencilLine" },
  { label: "Text", glyph: "text", badge: true },
  { label: "Arbeits-\nsymbole", glyph: "speech" },
  { label: "Ampel", glyph: "lights" },
  { label: "Timer", glyph: "hourglass" },
  { label: "Uhr", glyph: "clock" },
];

const LINES = [
  "Akkusativ: den die das",
  "Dativ: dem der dem",
  "Unbestimmter Artikel:",
  "Nominativ: ein eine ein",
  "Akkusativ: einen eine ein",
  "Dativ: einem einer einem",
  "Verb oder Präposition:",
  "kaufen",
  "Ich kaufe die Schokolade.",
  "Ich kaufe das Brot.",
  "Ich kaufe den Apfel.",
];

export default function App() {
  return (
    <Screen>
      <Global />
      <TopBar>
        <TopLeft>
          <Activities>Activities</Activities>
          <AppName>
            <svg width="15" height="15" viewBox="0 0 16 16">
              <circle cx="8" cy="8" r="7.500" fill="#4d87ea" />
              <circle cx="8" cy="8" r="3.500" fill="#fff" />
              <circle cx="8" cy="8" r="2.300" fill="#4285f4" />
            </svg>
            Chromium Web Browser
            <Caret />
          </AppName>
        </TopLeft>
        <Clock>Di  9:24 AM</Clock>
        <TopStatus>
          <BluetoothIcon size={16} />
          <FaWifi size={14} />
          <VolumeIcon size={15} />
          <svg width="12" height="17" viewBox="0 0 12 17">
            <rect x="1" y="2" width="10" height="14" fill="none" stroke="#c9c7c2" strokeWidth="1.2" />
            <rect x="4" y="0" width="4" height="2" fill="#c9c7c2" />
            <path d="M7 4L4 9h2l-1 4 3-5H6z" fill="#c9c7c2" />
          </svg>
          <Caret $gap={0} />
        </TopStatus>
      </TopBar>
      <Body>
        <Dock>
          {DOCK_ICONS.map((icon, i) => (
            <DockItem key={i} $active={i === 0}>
              {(i === 0 || i === 6) && <RunDot />}
              {icon}
            </DockItem>
          ))}
          <DockItem $push={30}>
            <svg width="30" height="30" viewBox="0 0 30 30" fill="#eee">
              {[3, 15, 27].flatMap((y) =>
                [3, 15, 27].map((x) => <circle key={`${x}-${y}`} cx={x} cy={y} r="3" />)
              )}
            </svg>
          </DockItem>
        </Dock>
        <Window>
          <TitleBar>
            <TitleText>Meeting findet statt ... - Chromium</TitleText>
            <WinButtons>
              <WinButton><Minus size={9} strokeWidth={3} /></WinButton>
              <WinButton><Square size={8} strokeWidth={3} /></WinButton>
              <WinButton $close><X size={10} strokeWidth={3} /></WinButton>
            </WinButtons>
          </TitleBar>
          <FavStrip>
            {FAV_ROW.map((kind, i) => (
              <FavSlot key={i}>
                <Fav kind={kind} size={15} />
              </FavSlot>
            ))}
            <ActiveFavTab><X size={13} /></ActiveFavTab>
            <FavSlot><Fav kind="emo" size={15} /></FavSlot>
            <FavSlot><Fav kind="crs" size={15} /></FavSlot>
            <FavSlot><Fav kind="nt" size={15} /></FavSlot>
            <PlusTab><Plus size={17} strokeWidth={2.2} /></PlusTab>
          </FavStrip>
          <AddressRow>
            <NavIcon><ArrowLeft size={18} /></NavIcon>
            <NavIcon $muted><ArrowRight size={18} /></NavIcon>
            <NavIcon><RotateCw size={16} /></NavIcon>
            <NavIcon><Home size={17} /></NavIcon>
            <Omnibox>
              <Lock size={12} fill="#5f6368" />
              <UrlText>
                <b>unistuttgart.webex.com</b>/webappng/sites/unistuttgart/meeting/download/ce92d67595c94ba9be0cb4c7c21ae106_20200421T063000Z?MTID=m30942414e4d1be477113653036162165&amp;launchApp...
              </UrlText>
              <OmniIcon><Video size={14} fill="#5f6368" /></OmniIcon>
              <OmniIcon>
                <svg width="16" height="16" viewBox="0 0 16 16">
                  <rect x="1" y="1" width="9" height="11" fill="#777" />
                  <rect x="6" y="4" width="9" height="11" fill="#fff" stroke="#777" />
                  <text x="10.500" y="13" fontSize="7" fontFamily="Noto Sans CJK SC" fill="#555" textAnchor="middle">文</text>
                </svg>
              </OmniIcon>
              <OmniIcon><Star size={16} /></OmniIcon>
            </Omnibox>
            <Extensions>
              <ExtIcon>
                <svg width="18" height="18" viewBox="0 0 18 18">
                  <path d="M5 0h8l5 5v8l-5 5H5l-5-5V5z" fill="#c4151c" />
                  <text x="9" y="12" fontSize="6.500" fontFamily="Liberation Sans" fontWeight="700" fill="#fff" textAnchor="middle">ABP</text>
                </svg>
              </ExtIcon>
              <ExtIcon>
                <svg width="16" height="16" viewBox="0 0 16 16">
                  <circle cx="8" cy="8" r="8" fill="#999" />
                  <text x="8" y="12" fontSize="11" fontFamily="Liberation Sans" fill="#eee" textAnchor="middle">C</text>
                </svg>
              </ExtIcon>
              <ExtIcon>
                <svg width="16" height="16" viewBox="0 0 16 16">
                  <path d="M1 3l4 1 3 8 3-8 4-1-6 12H7z" fill="#e8882a" />
                  <path d="M5 4l3 8 3-8" fill="none" stroke="#c33" strokeWidth="1.200" />
                </svg>
              </ExtIcon>
              <ExtIcon>
                <svg width="16" height="16" viewBox="0 0 16 16">
                  <circle cx="8" cy="8" r="7.500" fill="#0f4c6e" />
                  <circle cx="8" cy="8" r="4.500" fill="#fff" />
                  <path d="M8 3.500A4.500 4.500 0 0 1 12.500 8" stroke="#39b6d8" strokeWidth="2" fill="none" />
                </svg>
              </ExtIcon>
              <ExtIcon>
                <svg width="18" height="18" viewBox="0 0 18 18">
                  <circle cx="9" cy="9" r="9" fill="#15c39a" />
                  <text x="9" y="13.500" fontSize="12.500" fontFamily="Liberation Sans" fontWeight="700" fill="#fff" textAnchor="middle">G</text>
                </svg>
              </ExtIcon>
              <ExtIcon>
                <svg width="18" height="18" viewBox="0 0 18 18" fill="none" stroke="#2a80d8" strokeWidth="1.500">
                  <path d="M9 1v16M2 5l14 8M16 5L2 13" />
                  <circle cx="9" cy="9" r="3" />
                </svg>
              </ExtIcon>
              <ExtIcon>
                <svg width="16" height="18" viewBox="0 0 16 18" fill="none" stroke="#2a8cf0" strokeWidth="1.800">
                  <path d="M8 17L2 8a6 6 0 1 1 12 0c0 3-4 2-6 0" />
                </svg>
              </ExtIcon>
              <ThinSep />
              <ExtIcon>
                <svg width="24" height="24" viewBox="0 0 24 24">
                  <path d="M4 9a8 8 0 0 1 16 0z" fill="#f4902a" />
                  <rect x="4" y="9" width="16" height="7" fill="#f2f2f2" />
                  <path d="M4 16h16a8 8 0 0 1-16 0z" fill="#3f9a3a" />
                  <circle cx="12" cy="13" r="3.500" fill="#5a7a9a" />
                </svg>
              </ExtIcon>
              <ExtIcon><MoreVertical size={16} color="#5f6368" /></ExtIcon>
            </Extensions>
          </AddressRow>
          <BookmarkRow>
            {BOOKMARKS.map(([label, type]) => (
              <Bookmark key={label}>
                <BookmarkIcon type={type} />
                {label}
              </Bookmark>
            ))}
            <BookmarkEnd>
              »
              <ThinSep />
              <Bookmark $end>
                <BookmarkIcon />
                Other bookmarks
              </Bookmark>
            </BookmarkEnd>
          </BookmarkRow>
          <Stage>
            <InfoButton>
              <svg width="20" height="20" viewBox="0 0 20 20" fill="none" stroke="#111" strokeWidth="1.600">
                <circle cx="10" cy="10" r="8.500" />
                <path d="M10 9v5.500M10 5.500v1.600" />
              </svg>
            </InfoButton>
            <Meeting>
              <FxTabs>
                <FxTab $first>
                  <Fav kind="dash" size={18} />
                  Dashboard
                  <FxTabClose><X size={15} /></FxTabClose>
                </FxTab>
                <FxTab>
                  <Fav kind="emo" size={18} />
                  DaF A1.2/A2.1
                  <FxTabClose><X size={15} /></FxTabClose>
                </FxTab>
                <FxTab $active>
                  <Fav kind="crs" size={18} />
                  ClassroomScreen
                  <FxTabClose $dark><X size={15} /></FxTabClose>
                </FxTab>
                <FxTab $dim $pad={18}>
                  <Fav kind="nt" size={16} />
                  der - die - das
                  <FxTabClose><X size={15} /></FxTabClose>
                </FxTab>
                <FxNew><Plus size={20} /></FxNew>
                <FxWinControls>
                  <Minus size={15} />
                  <Copy size={13} />
                  <X size={17} strokeWidth={1.300} />
                </FxWinControls>
              </FxTabs>
              <FxToolbar>
                <BackCircle><ArrowLeft size={20} /></BackCircle>
                <FxNav $muted><ArrowRight size={20} /></FxNav>
                <FxNav><RotateCw size={18} /></FxNav>
                <FxNav><Home size={19} /></FxNav>
                <UrlBox>
                  <UrlIcon $w={32}><Shield size={15} /></UrlIcon>
                  <UrlIcon $w={40}><Lock size={14} fill="#4a4a4f" /></UrlIcon>
                  <UrlAddress>
                    https://www.<b>classroomscreen.com</b>
                  </UrlAddress>
                  <UrlActions>
                    <UrlIcon>
                      <svg width="18" height="6" viewBox="0 0 18 6" fill="#4a4a4f">
                        <circle cx="3" cy="3" r="2" /><circle cx="9" cy="3" r="2" /><circle cx="15" cy="3" r="2" />
                      </svg>
                    </UrlIcon>
                    <UrlIcon>
                      <svg width="17" height="17" viewBox="0 0 17 17" fill="none" stroke="#4a4a4f" strokeWidth="1.500">
                        <path d="M2 2h13v6a6.500 6.500 0 0 1-13 0z" />
                        <path d="M5 7l3.500 3L12 7" />
                      </svg>
                    </UrlIcon>
                    <UrlIcon><Star size={20} /></UrlIcon>
                  </UrlActions>
                </UrlBox>
                <FxRight>
                  <svg width="20" height="18" viewBox="0 0 20 18" stroke="#3c3c42" strokeWidth="1.500">
                    <path d="M3 1v16M7 1v16M11 1v16M13 1l5 16" />
                  </svg>
                  <svg width="20" height="18" viewBox="0 0 20 18" fill="none" stroke="#3c3c42" strokeWidth="1.500">
                    <rect x="1" y="1" width="18" height="16" rx="2" />
                    <path d="M7 1v16" />
                  </svg>
                  <svg width="20" height="20" viewBox="0 0 20 20" fill="none" stroke="#3c3c42" strokeWidth="1.500">
                    <circle cx="10" cy="10" r="8" />
                    <circle cx="10" cy="8" r="3" fill="#3c3c42" />
                    <circle cx="16" cy="3" r="3" fill="#2a9df4" stroke="none" />
                  </svg>
                  <FxMenu><Menu size={20} /></FxMenu>
                </FxRight>
              </FxToolbar>
              <Page>
                <Editor>
                  <EditToolbar>
                    <ZoomRow>
                      <FaMinus size={12} />
                      <ZoomPlus><FaPlus size={14} /></ZoomPlus>
                    </ZoomRow>
                    <EditRow>
                      <ToolBtn><FaBold size={15} /></ToolBtn>
                      <ToolBtn><FaItalic size={14} /></ToolBtn>
                      <ToolBtn><FaUnderline size={15} /></ToolBtn>
                      <ToolBtn><FaStrikethrough size={16} /></ToolBtn>
                      <ToolSep />
                      <ToolBtn><FaListOl size={15} color="#a5a5a5" /></ToolBtn>
                      <ToolBtn><FaListUl size={15} /></ToolBtn>
                      <ToolSep />
                      <ToolBtn $on><FaAlignLeft size={15} /></ToolBtn>
                      <ToolBtn><FaAlignCenter size={15} /></ToolBtn>
                      <ToolBtn><FaAlignRight size={15} /></ToolBtn>
                      <ToolSep />
                      <ToolBtn>
                        <svg width="18" height="16" viewBox="0 0 18 16">
                          <rect x="0" y="0" width="18" height="5" fill="#bbb" />
                          <rect x="0" y="7" width="18" height="2.500" fill="#777" />
                          <rect x="0" y="11" width="18" height="5" fill="#bbb" />
                        </svg>
                      </ToolBtn>
                      <ToolBtn $w={37}><FaRegSmile size={18} color="#8a8a8a" /></ToolBtn>
                      <ToolSep />
                      <SizeSelect>
                        26
                        <Caret $color="#777" $gap={0} />
                      </SizeSelect>
                      <ToolSep />
                      <ColorBtn>
                        <UnderA>A</UnderA>
                        <Caret $color="#777" $gap={0} />
                      </ColorBtn>
                      <ColorBtn $gap={2}>
                        <FilledA>A</FilledA>
                        <Caret $color="#777" $gap={0} />
                      </ColorBtn>
                      <ToolSep />
                    </EditRow>
                  </EditToolbar>
                  <MoveHandle><FaArrowsAlt size={24} /></MoveHandle>
                  <TextPane>
                    <TextFlow>
                      {LINES.map((line) => (
                        <Para key={line}>{line}</Para>
                      ))}
                      <Para>
                        Präpositionen: unter, über, an, auf,
                        <br />
                        zwischen, für, neben, hinter, durch, vor,
                        <br />
                        <Selected>nach</Selected>, mit, in
                      </Para>
                    </TextFlow>
                    <ScrollTrack>
                      <FaChevronUp size={10} />
                      <ScrollThumb />
                      <ScrollDown><FaChevronDown size={10} /></ScrollDown>
                    </ScrollTrack>
                  </TextPane>
                </Editor>
                <Hamburger>
                  <HamLine $w={18} />
                  <HamLine $w={26} />
                  <HamLine $w={18} />
                </Hamburger>
                <ToolPanel>
                  <Tool>
                    <FlagCircle>
                      <Stripe $c="#5d5d5b" />
                      <Stripe $c="#e86e68" />
                      <Stripe $c="#fcdc5c" />
                    </FlagCircle>
                    <ToolLabel>Sprache</ToolLabel>
                  </Tool>
                  {TOOLS.map((tool, i) => (
                    <Tool key={i}>
                      <ToolCircle><ToolGlyph name={tool.glyph} /></ToolCircle>
                      {tool.badge && (
                        <Badge><X size={13} strokeWidth={2.500} /></Badge>
                      )}
                      <ToolLabel>{tool.label}</ToolLabel>
                    </Tool>
                  ))}
                </ToolPanel>
                <SideButtons>
                  <SideButton>
                    <svg width="24" height="24" viewBox="0 0 24 24">
                      <rect x="3" y="8" width="8" height="6" fill="#e81010" />
                      <rect x="13" y="3" width="8" height="11" fill="#22d628" />
                      <path d="M4 20a4 4 0 0 1 6 0M14 17a4 4 0 0 0 6 0" fill="none" stroke="#eee" strokeWidth="1.600" />
                    </svg>
                  </SideButton>
                  <SideButton>
                    <svg width="24" height="24" viewBox="0 0 24 24" fill="none" stroke="#fff" strokeWidth="2">
                      <path d="M12 2v13M6 10l6 6 6-6" />
                      <path d="M3 21h18" strokeDasharray="3 1.600" strokeWidth="3" />
                    </svg>
                  </SideButton>
                  <SideButton>
                    <svg width="24" height="24" viewBox="0 0 24 24" fill="none" stroke="#e8e8e2" strokeWidth="1.500">
                      <path d="M3 21L10 14M14 10l7-7M15 3h6v6M3 15v6h6" />
                    </svg>
                  </SideButton>
                </SideButtons>
              </Page>
              <BottomBar />
              <SharePill>Anzeigen der Anwendung von Simone ...</SharePill>
              <SpeakerBar>
                <SpeakerBack>
                  <svg width="18" height="18" viewBox="0 0 18 18" fill="none" stroke="#f2f2f2" strokeWidth="1.300">
                    <path d="M2 2v14M16 9H5M10 4L5 9l5 5" />
                  </svg>
                </SpeakerBack>
                <SpeakerName>Es spricht: Simone Durina-Sasdi</SpeakerName>
              </SpeakerBar>
              <MutedMic>
                <svg width="44" height="42" viewBox="0 0 44 42" fill="none" stroke="#f04d2e" strokeWidth="1.500">
                  <rect x="16" y="6" width="12" height="23" rx="6" />
                  <path d="M10 31L30 4M22 29v6M16 35h12" />
                </svg>
              </MutedMic>
              <CursorMark width="16" height="22" viewBox="0 0 16 22">
                <path d="M1 1v17l4-4 3 7 3-1-3-7h6z" fill="#fff" stroke="#111" strokeWidth="1.200" />
              </CursorMark>
            </Meeting>
          </Stage>
        </Window>
      </Body>
    </Screen>
  );
}
